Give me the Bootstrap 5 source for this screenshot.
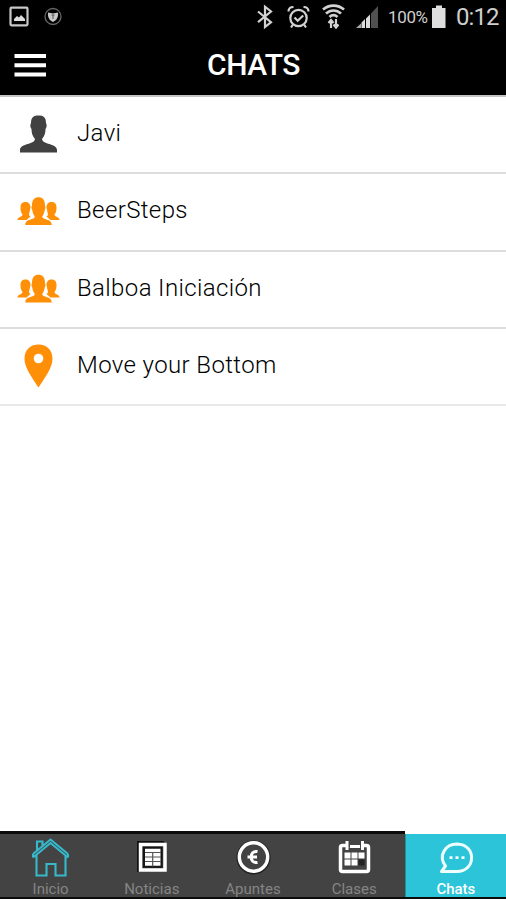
<!DOCTYPE html>
<html lang="es">
<head>
<meta charset="utf-8">
<meta name="viewport" content="width=device-width, initial-scale=1">
<title>Chats</title>
<link href="https://cdn.jsdelivr.net/npm/bootstrap@5.3.0/dist/css/bootstrap.min.css" rel="stylesheet">
<style>
body{font-family:Roboto,"Liberation Sans",sans-serif;height:900px;overflow:hidden;color:#222}
svg{display:block;flex:none}
.status-bar{height:34px;color:#cfcfcf}
.pct{font-size:17px;line-height:35px;width:39px;margin-left:9px;letter-spacing:-.35px;white-space:nowrap}
.clock{font-size:24px;line-height:35px;margin-left:10px;width:42px;letter-spacing:-.9px;white-space:nowrap}
.app-bar{height:61px;display:grid;grid-template-columns:60px 1fr 60px}
.app-title{font-size:30px;font-weight:500;line-height:62px;letter-spacing:-.5px;padding-left:1px}
.chat-list{border-top:2px solid #c4c4c4}
.chat-row{height:77.3px;border-bottom:2.5px solid #dcdcdc;font-size:24px;font-weight:300;color:#000;letter-spacing:.38px}
.chat-row:last-child{border-color:#e9e9e9}
.chat-name{line-height:30px;padding-bottom:3.4px}
.tabs{height:68px;border-bottom:2px solid #0b0b0b;margin-bottom:1px}
.tab{color:#858585;background:#434343;border-top:3px solid #0b0b0b;font-size:15px;line-height:19px;width:20%}
.tab svg{margin-top:1px}
.tab.on{background:#2bc4d9;color:#fff;font-weight:500;border-left:1px solid #2a8b9b;border-top:0;margin-top:3px}
</style>
<script src="https://cdn.jsdelivr.net/npm/bootstrap@5.3.0/dist/js/bootstrap.bundle.min.js"></script>
</head>
<body class="d-flex flex-column bg-white">
<svg width="0" height="0" class="position-absolute"><defs>
<g id="group" fill="#ff8f06">
<path d="M1 22.500C1 19 6 19.500 6 17C4.500 15 4 13 4 10C4 6 6 4.500 9 4.500S14 6.500 14 10L12.500 17C12.500 18 13.500 18.500 14 19L10 22.500Z"/>
<path d="M43 22.500C43 19 38 19.500 38 17C39.500 15 40 13 40 10C40 6 38 4.500 35 4.500S30 6.500 30 10L31.500 17C31.500 18 30.500 18.500 30 19L34 22.500Z"/>
<path stroke="#fff" stroke-width="1.200" paint-order="stroke" d="M8.700 27.500C8.700 20.500 18.300 23 18.300 19C16.500 16.500 16 14.500 15.800 12.500C14.800 11 14.800 9.500 15.500 8C15.500 2 18 -.3 22 -.3S28.500 2 28.500 8C29.200 9.500 29.200 11 28.200 12.500C28 14.500 27.500 16.500 25.700 19C25.700 23 35.300 20.500 35.300 27.500Z"/>
</g></defs></svg>
<header class="bg-black text-white flex-shrink-0">
<div class="status-bar d-flex align-items-center">
<svg width="64" height="34" fill="none" stroke="#c8c8c8"><rect x="10.500" y="7.700" width="17" height="17.600" rx="1" stroke-width="2.200"/><path d="M14 21v-2l3-3 2 1.500 2-2.500 4 4v2Z" fill="#ddd" stroke="none"/><circle cx="53" cy="16.500" r="8" stroke="#666" stroke-width="1.300"/><path d="M48 12.500l5 1 5-1c.5 5-1.500 8-5 9.500-3.500-1.500-5.500-4.500-5-9.500Z" fill="#c8c8c8" stroke="none"/><path d="M51.500 15h3M53 15v4" stroke="#555"/></svg>
<svg class="ms-auto" width="124" height="34" fill="none" stroke="#d2d2d2" stroke-width="2.200">
<path d="M3 11.500L16 22.200L10 27V6.700L16 11.500L3 22.200"/>
<circle cx="43.500" cy="18" r="8.200"/><path d="M39.500 17.500l3.200 3.200 5.500-5.200M33.500 11.500c0-3 2-4.500 5-4.500M53.500 11.500c0-3-2-4.500-5-4.500M38 24.500l-2 3M49 24.500l2 3"/>
<path d="M68 9.500c6-5.200 15-5.200 21 0M71 13.500c4.500-4 10.500-4 15 0M74.500 17c2.500-2.300 5.500-2.300 8 0" stroke-width="2.700"/><path d="M76 28v-8M81 19v8M73.500 23l2.500-3 2.500 3M78.500 24.500l2.500 3 2.500-3"/>
<path d="M101 28l5-4.500v4.500Z" fill="#aaa" stroke="none"/><path d="M106.500 28v-5.500l3.500-3.500v9ZM111 28v-9.500l4-4v13.500Z" fill="#dcdcdc" stroke="none"/><path d="M116 28v-14.500l7-7.500v22Z" fill="#505050" stroke="none"/></svg>
<div class="pct">100%</div>
<svg width="15" height="34" class="ms-1"><path d="M1 8h4v-2.500h6v2.500h3.500v20h-13.500Z" fill="#dedede"/></svg>
<div class="clock me-2">0:12</div>
</div>
<div class="app-bar text-center"><svg width="60" height="61"><path d="M14.500 21.900h31.500M14.500 31.200h31.500M14.500 40.400h31.500" stroke="#fff" stroke-width="4"/></svg><div class="app-title">CHATS</div></div>
</header>
<main class="flex-grow-1">
<div class="chat-list">
<div class="chat-row d-flex align-items-center"><svg width="77" height="75"><path d="M20 55.500V52.500C21 46 34 48 35 42C32.500 39 31.500 36 31.500 32C30 30 30 28 31 26C31 20 34 18.500 38.500 18.500S46 20 46 26C47 28 47 30 45.500 32C45.500 36 44.500 39 42 42C43 48 56 46 57 52.500V55.500Z" fill="#414141"/></svg><div class="chat-name">Javi</div></div>
<div class="chat-row d-flex align-items-center"><svg width="77" height="75"><use href="#group" x="16.500" y="23.500"/></svg><div class="chat-name">BeerSteps</div></div>
<div class="chat-row d-flex align-items-center"><svg width="77" height="75"><use href="#group" x="16.500" y="23"/></svg><div class="chat-name">Balboa Iniciación</div></div>
<div class="chat-row d-flex align-items-center"><svg width="77" height="75"><path d="M38.500 58.500C33 50 24.500 39 24.500 30C24.500 21 30 15.500 38.500 15.500S52.500 21 52.500 30C52.500 39 44 50 38.500 58.500Z" fill="#ff8f06"/><circle cx="38.500" cy="29.500" r="4.800" fill="#fff"/></svg><div class="chat-name">Move your Bottom</div></div>
</div>
</main>
<nav class="tabs d-flex flex-shrink-0">
<div class="tab d-flex flex-column align-items-center"><svg width="42" height="45" fill="none" stroke="#35b9cb" stroke-width="2.100"><path d="M6.500 20V40.500H16.500V29H25.500V40.500H35.500V20M3 22.500L20.500 8L38 22.500M3 19L20.500 4.500L38 19M3 19v3.500M38 19v3.500M7 15.500V6.500H12.500V11"/></svg><span>Inicio</span></div>
<div class="tab d-flex flex-column align-items-center"><svg width="42" height="45" fill="none"><path d="M7 37V7H33" stroke="#111" stroke-width="2"/><rect x="9.500" y="9.500" width="24.500" height="25.500" stroke="#fff" stroke-width="3.500"/><path d="M13 12.700h17.500v19H13Z" fill="#fff" stroke="#151515" stroke-width="2"/><path d="M14 17.500h16M14 22h16M14 26.500h16M21.700 17.500v14" stroke="#555" stroke-width="1.200"/></svg><span>Noticias</span></div>
<div class="tab d-flex flex-column align-items-center"><svg width="42" height="45" fill="none"><circle cx="21.500" cy="22.500" r="16.300" stroke="#222" stroke-width="1.500"/><circle cx="21.500" cy="22" r="14.200" stroke="#fff" stroke-width="3.400"/><path d="M25.500 16.500c-8.500-1.500-8.500 12.500 0 11M15.500 22h9.500" stroke="#fff" stroke-width="3"/></svg><span>Apuntes</span></div>
<div class="tab d-flex flex-column align-items-center"><svg width="42" height="45" fill="none"><rect x="7.500" y="10.500" width="28" height="26" rx="2" stroke="#fff" stroke-width="3.500"/><path d="M13 10H31" stroke="#434343" stroke-width="5"/><path d="M14 6v9M29.500 6v9M17 11.500h10" stroke="#fff" stroke-width="3"/><path d="M11.500 17.500h6v6h-6ZM18.500 17.500h6v6h-6ZM25.500 17.500h6v6h-6ZM11.500 24.500h6v6h-6ZM18.500 24.500h6v6h-6Z" fill="#fff"/><path d="M25.500 24.500h6v6h-6Z" fill="#222"/></svg><span>Clases</span></div>
<div class="tab on d-flex flex-column align-items-center"><svg width="42" height="45" fill="none"><path d="M6.500 36.500L10.500 31C3 21 10 9 22 9C42 9.500 41 36.500 22 36.500Z" stroke="#efffff" stroke-width="3" stroke-linejoin="round"/><path d="M14.500 22.700h3M20.500 22.700h3M26.500 22.700h3" stroke="#efffff" stroke-width="2.700"/></svg><span>Chats</span></div>
</nav>
</body>
</html>
